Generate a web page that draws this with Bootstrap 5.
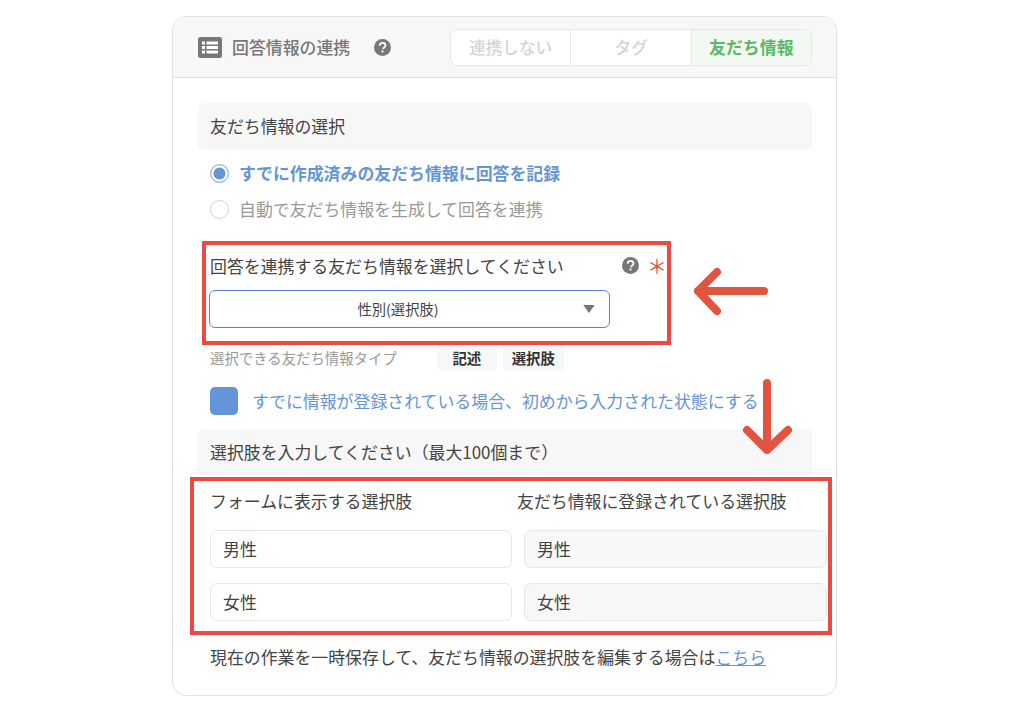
<!DOCTYPE html>
<html lang="ja">
<head>
<meta charset="utf-8">
<title>回答情報の連携</title>
<link href="https://cdn.jsdelivr.net/npm/bootstrap@5.3.0/dist/css/bootstrap.min.css" rel="stylesheet">
<style>
html,body{height:717px;overflow:hidden;background:#fff}
body{font-family:"Noto Sans CJK JP","Noto Sans",sans-serif;font-size:16.9px;color:#444;position:relative}
.shell{width:665px;height:680px;margin:16px 0 0 172px;border:1.5px solid #e2e2e2;border-radius:14px;overflow:hidden}
.shell-head{height:61px;padding:0 24px 0 25px;background:#f7f7f7;border-bottom:1.5px solid #e2e2e2;color:#777;font-weight:500;border-radius:0}
.head-title{margin-left:10px}
.head-help{margin-left:24px}
.tabset{margin-left:auto;width:362px;height:37px;border:1.5px solid #e6e6e6;border-radius:7px;overflow:hidden;background:#fff}
.tab-item{flex:1 1 0;display:flex;align-items:center;justify-content:center;color:#d4d4d4;font-size:16.6px;border-right:1.5px solid #e6e6e6}
.tab-item:last-child{border-right:0;background:#f3f9f2;color:#5cb868;font-weight:700;font-size:16.9px}
.shell-main{padding:25px 24px 0 25px}
.sect{height:47px;background:#f7f7f7;border-radius:6px;padding:0 12px 2px;display:flex;align-items:center;color:#444}
.radios{padding:5px 12px 0}
.radio-row{height:36px;display:flex;align-items:center;gap:10px;color:#999;margin:0}
.radio-row.on{color:#6495d8;font-weight:700}
.radio-mark{width:19px;height:19px;border-radius:50%;border:1.5px solid #d4d4d4;background:#fff;flex:none}
.on .radio-mark{border-color:#8fb5e6;background:#6495d8;box-shadow:inset 0 0 0 2.5px #fff}
.pick{padding:27px 12px 0 12px;width:473px}
.pick-label{height:25px;padding-bottom:2px;display:flex;align-items:center;color:#444}
.help-q{margin-left:auto;margin-right:8px}
.req{color:#e8503f;font-size:20px;line-height:25px;height:25px;margin-right:-8px}
.pick-select{width:401px;height:38px;margin:11px 0 0 -1px;border:1.5px solid #5b80dc;border-radius:6px;color:#444;font-size:14.3px;text-align:center;text-align-last:center;background-position:right 14px center;background-size:12px 8px;padding:0 53px 0 30px}
.pick-select:focus{border-color:#5b80dc;box-shadow:none}
.types{padding:15px 12px 0;display:flex;align-items:center;height:44px;color:#999;font-size:14.4px}
.type-chip{width:60px;height:27px;background:#f7f7f7;border-radius:5px;color:#333;font-weight:700;font-size:14.4px;display:flex;align-items:center;justify-content:center;margin-left:6px}
.type-chip.first{margin-left:40px}
.type-chip.wide{width:61px}
.check-row{padding:15px 12px 14px;display:flex;align-items:center;gap:14px;color:#6495d8}
.check-box{width:28px;height:28px;background:#6495d8;border-radius:5px;flex:none}
.pairs{padding:0 0 0 12px;margin-right:-15px;display:grid;grid-template-columns:302px 303px;column-gap:12px}
.pair-head{height:52px;margin-bottom:2px;padding-bottom:2px;display:flex;align-items:center;color:#444}
.pair-head.second{margin-left:-7px}
.choice{height:38px;border:1.5px solid #e6e6e6;border-radius:7px;padding:0 12px 2px;font-size:16.9px;color:#444;margin-bottom:15px}
.choice:disabled{background:#f7f7f7;color:#444;opacity:1}
.foot-note{padding:8px 12px 0;color:#444}
.foot-note a{color:#6495d8}
.mark-box{position:absolute;border:4px solid #ea4a42;pointer-events:none}
.mark-one{left:202px;top:241px;width:469px;height:104px}
.mark-two{left:190px;top:477px;width:642px;height:158px}
.mark-arrow{position:absolute;pointer-events:none}
.arrow-left{left:690px;top:264px}
.arrow-down{left:738px;top:376px}
</style>
</head>
<body>
<div class="card shell">
  <div class="card-header shell-head d-flex align-items-center">
    <svg width="24" height="21" viewBox="0 0 24 21"><rect width="24" height="21" rx="2.500" fill="#777"/><g fill="#fff"><rect x="4" y="4.500" width="3" height="3"/><rect x="4" y="9" width="3" height="3"/><rect x="4" y="13.500" width="3" height="3"/><rect x="8.500" y="4.500" width="11.500" height="3"/><rect x="8.500" y="9" width="11.500" height="3"/><rect x="8.500" y="13.500" width="11.500" height="3"/></g></svg>
    <span class="head-title">回答情報の連携</span>
    <svg class="head-help" width="17" height="17" viewBox="0 0 16 16"><circle cx="8" cy="8" r="8" fill="#777"/><path d="M5.300 6.200C5.400 4.600 6.500 3.700 8.100 3.700c1.600 0 2.700 1 2.700 2.300 0 1-.5 1.500-1.300 2.100-.7.5-.9.8-.9 1.500" fill="none" stroke="#fff" stroke-width="1.700"/><rect x="7.100" y="10.800" width="1.800" height="1.800" fill="#fff"/></svg>
    <div class="tabset d-flex">
      <div class="tab-item">連携しない</div>
      <div class="tab-item">タグ</div>
      <div class="tab-item">友だち情報</div>
    </div>
  </div>
  <div class="card-body shell-main">
    <div class="sect">友だち情報の選択</div>
    <div class="radios">
      <div class="radio-row on"><span class="radio-mark"></span>すでに作成済みの友だち情報に回答を記録</div>
      <div class="radio-row"><span class="radio-mark"></span>自動で友だち情報を生成して回答を連携</div>
    </div>
    <div class="pick">
      <div class="pick-label">回答を連携する友だち情報を選択してください
        <svg class="help-q" width="17" height="17" viewBox="0 0 16 16"><circle cx="8" cy="8" r="8" fill="#777"/><path d="M5.300 6.200C5.400 4.600 6.500 3.700 8.100 3.700c1.600 0 2.700 1 2.700 2.300 0 1-.5 1.500-1.300 2.100-.7.5-.9.8-.9 1.500" fill="none" stroke="#fff" stroke-width="1.700"/><rect x="7.100" y="10.800" width="1.800" height="1.800" fill="#fff"/></svg>
        <span class="req">＊</span>
      </div>
      <select class="form-select pick-select" style="background-image:url(&quot;data:image/svg+xml,%3csvg xmlns='http://www.w3.org/2000/svg' viewBox='0 0 13 9'%3e%3cpath fill='%23777' d='M0 0h13L6.500 9z'/%3e%3c/svg%3e&quot;)"><option>性別(選択肢)</option></select>
    </div>
    <div class="types">選択できる友だち情報タイプ<span class="type-chip first">記述</span><span class="type-chip wide">選択肢</span></div>
    <div class="check-row"><span class="check-box"></span>すでに情報が登録されている場合、初めから入力された状態にする</div>
    <div class="sect">選択肢を入力してください（最大100個まで）</div>
    <div class="pairs">
      <div class="pair-head">フォームに表示する選択肢</div>
      <div class="pair-head second">友だち情報に登録されている選択肢</div>
      <input class="form-control choice" value="男性">
      <input class="form-control choice" value="男性" disabled>
      <input class="form-control choice" value="女性">
      <input class="form-control choice" value="女性" disabled>
    </div>
    <div class="foot-note">現在の作業を一時保存して、友だち情報の選択肢を編集する場合は<a href="#">こちら</a></div>
  </div>
</div>
<div class="mark-box mark-one"></div>
<div class="mark-box mark-two"></div>
<svg class="mark-arrow arrow-left" width="84" height="60" viewBox="0 0 84 60"><path d="M74 27H8M27 8L8 27L27 47" fill="none" stroke="#e25440" stroke-width="8" stroke-linecap="round" stroke-linejoin="round"/></svg>
<svg class="mark-arrow arrow-down" width="60" height="84" viewBox="0 0 60 84"><path d="M29 7V74M9 54L29 74L50 54" fill="none" stroke="#e25440" stroke-width="8" stroke-linecap="round" stroke-linejoin="round"/></svg>
</body>
</html>
